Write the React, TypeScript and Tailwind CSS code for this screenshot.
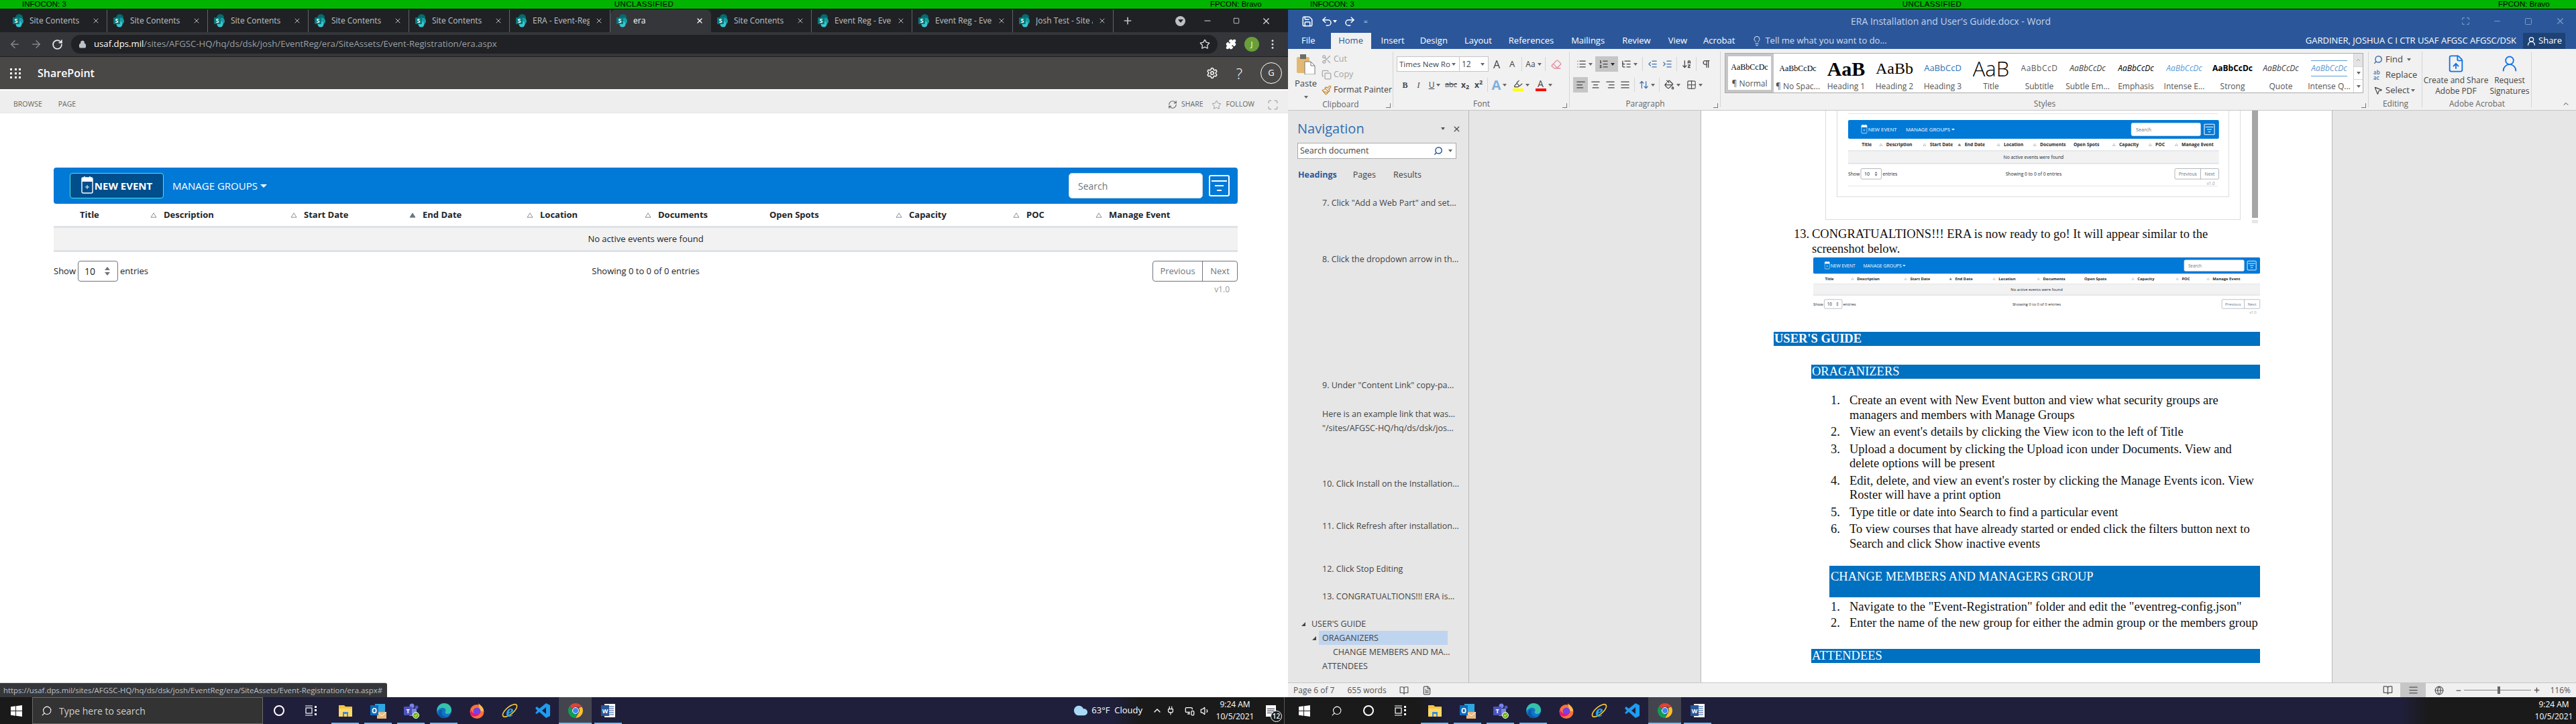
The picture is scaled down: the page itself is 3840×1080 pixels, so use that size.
import type { ReactNode } from 'react';
import {
  AlignCenter,
  AlignJustify,
  AlignLeft,
  AlignRight,
  ArrowDownAZ,
  ArrowLeft,
  ArrowRight,
  BookOpen,
  ChevronUp,
  Cloud,
  Copy,
  EllipsisVertical,
  FileText,
  FileUp,
  Globe,
  IndentDecrease,
  IndentIncrease,
  Lightbulb,
  List,
  ListOrdered,
  ListTree,
  Lock,
  Maximize,
  Minus,
  MonitorSmartphone,
  MousePointer2,
  Paintbrush,
  PaintBucket,
  Pilcrow,
  Plus,
  Plug,
  Puzzle,
  Redo2,
  RotateCw,
  Save,
  Scissors,
  Search,
  Settings,
  Square,
  Star,
  Undo2,
  UserRound,
  Volume1,
  X,
  Eraser,
  Grid2x2,
  ArrowUpDown,
  RefreshCw,
  Highlighter,
} from 'lucide-react';

const TAB_TITLES = [
  'Site Contents',
  'Site Contents',
  'Site Contents',
  'Site Contents',
  'Site Contents',
  'ERA - Event-Reg',
];
const TAB_TITLES_AFTER = ['Site Contents', 'Event Reg - Ever', 'Event Reg - Ever', 'Josh Test - Site A'];

const COLS_FULL = 'grid-cols-[143px_209px_177px_175px_176px_187px_187px_175px_123px_1fr]';
const COLS_SHOT_A = 'grid-cols-[88px_125px_100px_112px_104px_117px_110px_104px_75px_1fr]';
const COLS_SHOT_B = 'grid-cols-[124px_176px_149px_144px_147px_158px_155px_147px_102px_1fr]';

const HEADERS = [
  { label: 'Title', sort: '' },
  { label: 'Description', sort: 'up' },
  { label: 'Start Date', sort: 'up' },
  { label: 'End Date', sort: 'on' },
  { label: 'Location', sort: 'up' },
  { label: 'Documents', sort: 'up' },
  { label: 'Open Spots', sort: '' },
  { label: 'Capacity', sort: 'up' },
  { label: 'POC', sort: 'up' },
  { label: 'Manage Event', sort: 'up' },
];

const STYLES = [
  { sample: 'AaBbCcDc', label: '¶ Normal', cls: "text-[12px] text-black font-['Liberation_Serif',serif]" },
  { sample: 'AaBbCcDc', label: '¶ No Spac...', cls: "text-[12px] text-black font-['Liberation_Serif',serif]" },
  { sample: 'AaB', label: 'Heading 1', cls: "text-[30px] font-bold text-black font-['Liberation_Serif',serif]" },
  { sample: 'AaBb', label: 'Heading 2', cls: "text-[24px] text-black font-['Liberation_Serif',serif]" },
  { sample: 'AaBbCcD', label: 'Heading 3', cls: 'text-[13px] text-[#2e74b5]' },
  { sample: 'AaB', label: 'Title', cls: 'text-[31px] font-light text-black' },
  { sample: 'AaBbCcD', label: 'Subtitle', cls: 'text-[12px] tracking-[0.5px] text-[#5a5a5a]' },
  { sample: 'AaBbCcDc', label: 'Subtle Em...', cls: 'text-[12px] italic text-[#404040]' },
  { sample: 'AaBbCcDc', label: 'Emphasis', cls: 'text-[12px] italic text-black' },
  { sample: 'AaBbCcDc', label: 'Intense E...', cls: 'text-[12px] italic text-[#5b9bd5]' },
  { sample: 'AaBbCcDc', label: 'Strong', cls: 'text-[12px] font-bold text-black' },
  { sample: 'AaBbCcDc', label: 'Quote', cls: 'text-[12px] italic text-[#404040]' },
  { sample: 'AaBbCcDc', label: 'Intense Q...', cls: 'text-[12px] italic text-[#5b9bd5] border-y border-[#5b9bd5] py-[2px]' },
];

const NAV_ITEMS = [
  { text: '7. Click "Add a Web Part" and set...', cls: 'pl-[51px] mt-[21px]' },
  { text: '8. Click the dropdown arrow in th...', cls: 'pl-[51px] mt-[63px]' },
  { text: '9. Under "Content Link" copy-pa...', cls: 'pl-[51px] mt-[167px]' },
  { text: 'Here is an example link that was...', cls: 'pl-[51px] mt-[22px]' },
  { text: '"/sites/AFGSC-HQ/hq/ds/dsk/jos...', cls: 'pl-[51px]' },
  { text: '10. Click Install on the Installation...', cls: 'pl-[51px] mt-[62px]' },
  { text: '11. Click Refresh after installation...', cls: 'pl-[51px] mt-[42px]' },
  { text: '12. Click Stop Editing', cls: 'pl-[51px] mt-[43px]' },
  { text: '13. CONGRATUALTIONS!!! ERA is...', cls: 'pl-[51px] mt-[20px]' },
];

function SharePointIcon() {
  return (
    <svg viewBox="0 0 16 20" className="h-[20px] w-[16px] shrink-0">
      <circle cx="9.5" cy="5.5" r="5.5" fill="#036c70" />
      <circle cx="11" cy="10.5" r="5" fill="#1a9ba1" />
      <circle cx="9" cy="15" r="4.5" fill="#37c6d0" />
      <rect x="0" y="5" width="10" height="10" rx="1" fill="#03787c" />
      <text x="5" y="13" fontSize="9" fontWeight="700" fill="#fff" textAnchor="middle">
        S
      </text>
    </svg>
  );
}

function GreenBar() {
  return (
    <div className="relative flex h-[14px] shrink-0 items-center justify-center border-b border-black bg-[#00b400] font-['Liberation_Sans',sans-serif] text-[11.5px] leading-[13px] text-black">
      <span className="absolute left-[33px]">INFOCON: 3</span>
      <span className="tracking-[0.4px]">UNCLASSIFIED</span>
      <span className="absolute left-[1804px]">FPCON: Bravo</span>
    </div>
  );
}

function BrowserTab({ title }: { title: string }) {
  return (
    <div className="flex h-[34px] w-[150px] shrink-0 items-center border-r border-[#5f6368] bg-[#202124] bg-clip-padding pl-[9px]">
      <SharePointIcon />
      <span className="ml-[9px] w-[85px] overflow-hidden text-[12px] whitespace-nowrap text-[#bdc1c6]">{title}</span>
      <X className="ml-[8px] size-[12px] text-[#bdc1c6]" strokeWidth={2} />
    </div>
  );
}

function BrowserChrome() {
  return (
    <>
      <div className="flex h-[34px] shrink-0 items-center bg-[#202124] pl-[10px]">
        {TAB_TITLES.map((t, i) => (
          <BrowserTab key={i} title={t} />
        ))}
        <div className="flex h-[34px] w-[150px] shrink-0 items-center rounded-t-[8px] bg-[#35363a] pl-[9px]">
          <SharePointIcon />
          <span className="ml-[9px] w-[85px] text-[12px] text-white">era</span>
          <X className="ml-[8px] size-[12px] text-white" strokeWidth={2.5} />
        </div>
        {TAB_TITLES_AFTER.map((t, i) => (
          <BrowserTab key={i} title={t} />
        ))}
        <Plus className="ml-[13px] size-[16px] text-[#bdc1c6]" strokeWidth={2.5} />
        <div className="ml-[63px] flex size-[15px] items-center justify-center rounded-full bg-[#bdc1c6]">
          <div className="size-0 border-x-[4px] border-t-[5px] border-x-transparent border-t-[#202124]" />
        </div>
        <Minus className="ml-[26px] size-[14px] text-[#dadce0]" />
        <Square className="ml-[31px] size-[10px] text-[#dadce0]" />
        <X className="ml-[32px] size-[15px] text-[#dadce0]" />
      </div>
      <div className="flex h-[37px] shrink-0 items-center border-b border-[#1f1f1f] bg-[#35363a] pr-[14px] pl-[13px]">
        <ArrowLeft className="size-[18px] text-[#85878b]" />
        <ArrowRight className="ml-[14px] size-[18px] text-[#85878b]" />
        <RotateCw className="ml-[14px] size-[17px] text-[#e8eaed]" strokeWidth={2.5} />
        <div className="ml-[12px] flex h-[28px] flex-1 items-center rounded-full bg-[#202124] pr-[11px] pl-[11px]">
          <Lock className="size-[12px] text-[#bdc1c6]" fill="#bdc1c6" />
          <span className="ml-[11px] text-[13.2px] whitespace-nowrap text-[#9aa0a6]">
            <span className="text-white">usaf.dps.mil</span>/sites/AFGSC-HQ/hq/ds/dsk/josh/EventReg/era/SiteAssets/Event-Registration/era.aspx
          </span>
          <Star className="ml-auto size-[16px] text-[#dadce0]" />
        </div>
        <Puzzle className="ml-[12px] size-[16px] text-white" fill="#fff" />
        <div className="ml-[12px] flex size-[22px] items-center justify-center rounded-full bg-[#689f38] text-[11px] text-white">
          J
        </div>
        <EllipsisVertical className="ml-[11px] size-[18px] text-[#dadce0]" />
      </div>
    </>
  );
}

function SortArrow({ state }: { state: string }) {
  if (!state) return null;
  return (
    <svg viewBox="0 0 12 10" className="mr-[9px] h-[8px] w-[12px] shrink-0">
      <path d="M6 1 L11 9 L1 9 Z" fill={state === 'on' ? '#6c757d' : 'none'} stroke="#6c757d" strokeWidth="1" />
    </svg>
  );
}

function CalendarPlusIcon() {
  return (
    <svg viewBox="0 0 18 34" className="h-[34px] w-[18px] shrink-0">
      <rect x="1" y="5" width="16" height="23" rx="2" fill="none" stroke="#fff" strokeWidth="1.4" />
      <rect x="1" y="5" width="16" height="6" fill="#fff" />
      <path d="M5 3v3M13 3v3" stroke="#fff" strokeWidth="1.4" />
      <path d="M9 16v6M6 19h6" stroke="#fff" strokeWidth="1" />
    </svg>
  );
}

function EventTable({ cols, plain = false }: { cols: string; plain?: boolean }) {
  return (
    <div className="flex w-full flex-col text-[#212529]">
      <div className="flex h-[54px] items-center rounded-[4px] bg-[#0179d7] pr-[12px] pl-[24px]">
        {plain ? (
          <div className="flex h-[38px] items-center gap-[2px] px-[13px] text-[15px] text-white">
            <CalendarPlusIcon />
            NEW EVENT
          </div>
        ) : (
          <div className="flex h-[38px] w-[140px] items-center justify-center gap-[2px] rounded-[4px] border border-[#4fe3e8] bg-[#004e8c] text-[15px] font-bold text-white">
            <CalendarPlusIcon />
            NEW EVENT
          </div>
        )}
        <span className="ml-[13px] text-[15px] text-white">MANAGE GROUPS</span>
        <div className="ml-[4px] size-0 border-x-[5px] border-t-[5px] border-x-transparent border-t-white" />
        <div className="ml-auto flex h-[38px] w-[200px] items-center rounded-[5px] border border-[#ced4da] bg-white pl-[13px] text-[14px] text-[#6c757d]">
          Search
        </div>
        <div className="ml-[9px] flex h-[32px] w-[31px] flex-col items-center justify-center gap-[5px] rounded-[3px] border-2 border-white">
          <div className="h-[2px] w-[23px] bg-white" />
          <div className="h-[2px] w-[13px] bg-white" />
          <div className="h-[2px] w-[7px] bg-white" />
        </div>
      </div>
      <div className={`grid h-[36px] items-center border-b-[3px] border-[#dee2e6] text-[13px] font-bold ${cols}`}>
        {HEADERS.map((h, i) => (
          <div key={h.label} className={i === 0 ? 'pl-[39px]' : 'flex items-center'}>
            <SortArrow state={h.sort} />
            {h.label}
          </div>
        ))}
      </div>
      <div className="flex h-[36px] items-center justify-center border-b-[3px] border-[#dee2e6] bg-[#f2f2f2] text-[13px]">
        No active events were found
      </div>
      <div className="mt-[13px] flex items-center text-[13px]">
        <div className="flex flex-1 items-center">
          Show
          <div className="mx-[3px] flex h-[31px] w-[60px] items-center justify-between rounded-[4px] border border-[#6c757d] pr-[11px] pl-[9px] text-[14px]">
            10
            <div className="flex flex-col gap-[3px]">
              <div className="size-0 border-x-[4px] border-b-[5px] border-x-transparent border-b-[#6c757d]" />
              <div className="size-0 border-x-[4px] border-t-[5px] border-x-transparent border-t-[#6c757d]" />
            </div>
          </div>
          entries
        </div>
        <span>Showing 0 to 0 of 0 entries</span>
        <div className="flex flex-1 justify-end">
          <div className="flex h-[31px] items-center rounded-[4px] border border-[#6c757d] text-[#6c757d]">
            <span className="flex h-full w-[74px] items-center justify-center border-r border-[#6c757d]">Previous</span>
            <span className="flex h-full w-[51px] items-center justify-center">Next</span>
          </div>
        </div>
      </div>
      <div className="mt-[4px] pr-[12px] text-right text-[12px] leading-[16px] text-[#9a9a9a]">v1.0</div>
    </div>
  );
}

function SharePointPage() {
  return (
    <div className="relative flex min-h-0 flex-1 flex-col bg-white">
      <div className="flex h-[48px] shrink-0 items-center bg-[#4a4846] pr-[9px] pl-[15px] text-white">
        <div className="grid w-[17px] grid-cols-3 gap-[3px]">
          {Array.from({ length: 9 }).map((_, i) => (
            <div key={i} className="size-[3px] bg-white" />
          ))}
        </div>
        <span className="ml-[24px] text-[16px] font-semibold">SharePoint</span>
        <Settings className="ml-auto size-[18px]" />
        <span className="ml-[27px] text-[22px] font-light">?</span>
        <div className="ml-[27px] flex size-[32px] items-center justify-center rounded-full border border-white text-[13px]">
          G
        </div>
      </div>
      <div className="mt-[2px] flex h-[34px] shrink-0 items-center border-b border-[#e6e6e6] bg-[#eeeeee] pt-[9px] pr-[14px] pl-[20px] text-[10.5px] text-[#666666]">
        <span>BROWSE</span>
        <span className="ml-[24px]">PAGE</span>
        <RefreshCw className="ml-auto size-[14px]" />
        <span className="ml-[6px]">SHARE</span>
        <Star className="ml-[12px] size-[15px]" strokeWidth={1} />
        <span className="ml-[7px]">FOLLOW</span>
        <Maximize className="ml-[19px] size-[17px]" strokeWidth={1} />
      </div>
      <div className="pt-[81px] pr-[75px] pl-[80px]">
        <EventTable cols={COLS_FULL} />
      </div>
      <div className="absolute bottom-0 left-0 flex h-[22px] w-[577px] items-center rounded-tr-[3px] border-t border-[#d8d8d8] bg-[#35363a] pl-[5px] text-[11.4px] whitespace-nowrap text-[#bdc1c6]">
        https://usaf.dps.mil/sites/AFGSC-HQ/hq/ds/dsk/josh/EventReg/era/SiteAssets/Event-Registration/era.aspx#
      </div>
    </div>
  );
}

function WindowsLogo() {
  return (
    <svg viewBox="0 0 18 18" className="size-[17px]">
      <path d="M0 2.5 7.5 1.4V8.5H0Z M8.5 1.3 18 0V8.5H8.5Z M0 9.5H7.5V16.6L0 15.5Z M8.5 9.5H18V18L8.5 16.7Z" fill="#fff" />
    </svg>
  );
}

function ExplorerIcon() {
  return (
    <svg viewBox="0 0 24 24" className="size-[24px]">
      <path d="M2 4h8l2 2h10v15H2Z" fill="#f5c242" />
      <path d="M2 9h20v12H2Z" fill="#ffd966" />
      <path d="M8 14h8v7h-2v-4h-4v4H8Z" fill="#3d8bd4" />
    </svg>
  );
}

function OutlookIcon() {
  return (
    <svg viewBox="0 0 24 24" className="size-[24px]">
      <rect x="7" y="2" width="15" height="13" fill="#2fa6e0" />
      <path d="M10 14h14v10H10Z" fill="#e8b97e" />
      <path d="M10 14l7 6 7-6" fill="none" stroke="#fff" strokeWidth="1" />
      <rect x="0" y="4" width="12" height="15" fill="#0f6cbd" />
      <text x="6" y="16" fontSize="10" fontWeight="700" fill="#fff" textAnchor="middle">
        O
      </text>
    </svg>
  );
}

function TeamsIcon() {
  return (
    <svg viewBox="0 0 24 24" className="size-[24px]">
      <circle cx="13" cy="5" r="3.5" fill="#7b83eb" />
      <circle cx="20" cy="7" r="2.5" fill="#5059c9" />
      <rect x="9" y="9" width="11" height="11" rx="1" fill="#7b83eb" />
      <rect x="1" y="6" width="12" height="13" rx="1" fill="#4b53bc" />
      <text x="7" y="16" fontSize="9" fontWeight="700" fill="#fff" textAnchor="middle">
        T
      </text>
      <circle cx="19" cy="19" r="4.5" fill="#6bb700" stroke="#fff" strokeWidth="1" />
      <path d="M17 19l1.5 1.5 2.5-3" stroke="#fff" strokeWidth="1" fill="none" />
    </svg>
  );
}

function EdgeIcon() {
  return (
    <svg viewBox="0 0 24 24" className="size-[24px]">
      <circle cx="12" cy="12" r="11" fill="#1173c9" />
      <path d="M1.5 10C3 3 9 1 12 1c6 0 11 4 11 10 0 4-3 6-6 6-2 0-3.5-1-3.5-2.5 0-1 1-1.5 1-3C14.5 8.5 11 7 8 8 4.5 9 2.5 11 1.5 14Z" fill="#35c1a9" />
      <path d="M9 23c-4-1-6-5-5-9 1-3 4-4 6-3-3 2-2 8 3 10 3 1 6 0 8-2-2 3-7 5-12 4Z" fill="#0c59a4" />
    </svg>
  );
}

function FirefoxIcon() {
  return (
    <svg viewBox="0 0 24 24" className="size-[24px]">
      <circle cx="12" cy="13.5" r="10.5" fill="#ff7139" />
      <path d="M14 1c3 3 8 6 8 12h-6C16 8 15 5 14 1Z" fill="#ffbd4f" />
      <circle cx="12" cy="13" r="5.5" fill="#7542e5" />
      <path d="M3 11c2 6 9 8 13 5-2 5-10 7-14 1Z" fill="#e31587" />
    </svg>
  );
}

function IeIcon() {
  return (
    <svg viewBox="0 0 24 24" className="size-[26px]">
      <ellipse cx="12" cy="12" rx="12" ry="5" fill="none" stroke="#f3c63a" strokeWidth="1.5" transform="rotate(-40 12 12)" />
      <text x="12" y="20" fontSize="23" fontWeight="700" fontStyle="italic" fill="#2aa7e6" textAnchor="middle" fontFamily="Liberation Serif">
        e
      </text>
    </svg>
  );
}

function VsCodeIcon() {
  return (
    <svg viewBox="0 0 24 24" className="size-[24px]">
      <path d="M17 1 23 4v16l-6 3-10-9-4 3-2-1.5v-7L3 6l4 3Z" fill="#1f9cf0" />
      <path d="M17 7v10l-6-5Z" fill="#1e1e3c" />
      <path d="M1 8.5 4 12l-3 3.5Z" fill="#1e1e3c" />
    </svg>
  );
}

function ChromeIcon() {
  return (
    <svg viewBox="0 0 24 24" className="size-[24px]">
      <path d="M12 1a11 11 0 0 1 9.5 5.5H12a5.5 5.5 0 0 0-5 3.2L3.5 5A11 11 0 0 1 12 1Z" fill="#db4437" />
      <path d="M21.5 6.5A11 11 0 0 1 12 23l4.7-8A5.5 5.5 0 0 0 16.5 8Z" fill="#fbc02d" />
      <path d="M12 23A11 11 0 0 1 3.5 5L8 12.5a5.5 5.5 0 0 0 6 5Z" fill="#0f9d58" />
      <circle cx="12" cy="12" r="4.5" fill="#4285f4" stroke="#fff" strokeWidth="1" />
    </svg>
  );
}

function WordIcon() {
  return (
    <svg viewBox="0 0 24 24" className="size-[24px]">
      <rect x="6" y="2" width="16" height="20" fill="#fff" />
      <path d="M12 6h8M12 9h8M12 12h8M12 15h8M12 18h8" stroke="#2b579a" strokeWidth="1.2" />
      <rect x="1" y="4" width="12" height="16" fill="#2b579a" />
      <text x="7" y="16" fontSize="9" fontWeight="700" fill="#fff" textAnchor="middle">
        W
      </text>
    </svg>
  );
}

function AppSlot({ children, active = false, running = true }: { children: ReactNode; active?: boolean; running?: boolean }) {
  return (
    <div className={`relative flex h-full w-[49px] items-center justify-center ${active ? 'bg-[#44444f]' : ''}`}>
      {children}
      {running && (
        <div className={`absolute bottom-0 h-[2px] bg-[#76b9ed] ${active ? 'inset-x-0' : 'inset-x-[4px]'}`} />
      )}
    </div>
  );
}

function TaskViewIcon() {
  return (
    <svg viewBox="0 0 18 16" className="h-[16px] w-[18px]">
      <path d="M0 1h11M0 15h11" stroke="#fff" strokeWidth="1.2" />
      <rect x="1" y="4" width="9" height="8" fill="none" stroke="#fff" strokeWidth="1.2" />
      <path d="M14 1h3v3h-3Zm0 5h3v3h-3Zm0 6h3v3h-3Z" fill="#fff" />
    </svg>
  );
}

function TaskbarApps() {
  return (
    <>
      <div className="flex h-full w-[48px] items-center justify-center">
        <div className="size-[16px] rounded-full border-[2.5px] border-white" />
      </div>
      <div className="mr-[2px] flex h-full w-[48px] items-center justify-center">
        <TaskViewIcon />
      </div>
      <AppSlot>
        <ExplorerIcon />
      </AppSlot>
      <AppSlot>
        <OutlookIcon />
      </AppSlot>
      <AppSlot>
        <TeamsIcon />
      </AppSlot>
      <AppSlot>
        <EdgeIcon />
      </AppSlot>
      <AppSlot running={false}>
        <FirefoxIcon />
      </AppSlot>
      <AppSlot running={false}>
        <IeIcon />
      </AppSlot>
      <AppSlot running={false}>
        <VsCodeIcon />
      </AppSlot>
      <AppSlot active>
        <ChromeIcon />
      </AppSlot>
      <AppSlot>
        <WordIcon />
      </AppSlot>
    </>
  );
}

function Clock() {
  return (
    <div className="flex w-[58px] flex-col items-center text-[12px] leading-[18px] text-white">
      <span>9:24 AM</span>
      <span>10/5/2021</span>
    </div>
  );
}

function LeftTaskbar() {
  return (
    <div className="flex h-[40px] shrink-0 items-center bg-[linear-gradient(90deg,#1a1a1a_0,#1a1a1a_392px,#1f1f3b_392px,#1f1f3b_1660px,#1a1a1a_1700px)]">
      <div className="flex h-full w-[48px] items-center justify-center">
        <WindowsLogo />
      </div>
      <div className="flex h-full w-[344px] items-center border border-[#6a6a6a] bg-[#333333] pl-[12px] text-[14px] text-[#cfcfcf]">
        <Search className="size-[17px] -scale-x-100 text-white" strokeWidth={1.5} />
        <span className="ml-[10px]">Type here to search</span>
      </div>
      <TaskbarApps />
      <div className="ml-auto flex h-full items-center pr-[5px] text-white">
        <Cloud className="size-[22px] text-[#a9d8f5]" fill="#a9d8f5" />
        <span className="ml-[5px] text-[13px] whitespace-nowrap">63°F&nbsp; Cloudy</span>
        <ChevronUp className="ml-[14px] size-[16px]" />
        <Plug className="ml-[5px] size-[14px]" />
        <MonitorSmartphone className="ml-[14px] size-[15px]" />
        <Volume1 className="ml-[8px] size-[15px]" />
        <div className="ml-[8px]">
          <Clock />
        </div>
        <div className="relative ml-[10px] flex h-full w-[34px] items-center justify-center">
          <div className="mr-[5px] flex h-[17px] w-[15px] flex-col justify-center gap-[2px] bg-white px-[2px]">
            <div className="h-[1px] bg-[#1f1f3b]" />
            <div className="h-[1px] bg-[#1f1f3b]" />
            <div className="h-[1px] bg-[#1f1f3b]" />
          </div>
          <div className="absolute right-[3px] bottom-[3px] flex size-[17px] items-center justify-center rounded-full border border-white bg-[#1a1a1a] text-[10px] font-semibold">
            12
          </div>
        </div>
        <div className="h-full w-[1px] bg-[#555555]" />
      </div>
    </div>
  );
}

function RightTaskbar() {
  return (
    <div className="flex h-[40px] shrink-0 items-center bg-[linear-gradient(90deg,#1a1a1a_0,#1a1a1a_192px,#1f1f3b_240px,#1f1f3b_1660px,#1a1a1a_1700px)]">
      <div className="flex h-full w-[48px] items-center justify-center">
        <WindowsLogo />
      </div>
      <div className="flex h-full w-[48px] items-center justify-center">
        <Search className="size-[17px] -scale-x-100 text-white" strokeWidth={1.5} />
      </div>
      <TaskbarApps />
      <div className="ml-auto pr-[4px]">
        <Clock />
      </div>
    </div>
  );
}

function RibbonGroup({ width, label, launcher = true, children }: { width: string; label: string; launcher?: boolean; children: ReactNode }) {
  return (
    <div className={`relative flex shrink-0 flex-col ${width}`}>
      <div className="h-[75px]">{children}</div>
      <div className="text-center text-[12px] leading-[18px] text-[#666666]">{label}</div>
      {launcher && (
        <div className="absolute right-[4px] bottom-[3px] size-[7px] border-r border-b border-[#777777]" />
      )}
      <div className="absolute top-[4px] right-0 bottom-[4px] w-[1px] bg-[#d5d5d5]" />
    </div>
  );
}

function Caret({ color = 'border-t-[#666666]' }: { color?: string }) {
  return <div className={`size-0 border-x-[3px] border-t-[4px] border-x-transparent ${color}`} />;
}

function Tool({ width = 'w-[22px]', active = false, children }: { width?: string; active?: boolean; children: ReactNode }) {
  return (
    <div className={`flex h-[23px] shrink-0 items-center justify-center gap-[3px] text-[#444444] ${width} ${active ? 'bg-[#c6c6c6]' : ''}`}>
      {children}
    </div>
  );
}

function Sep() {
  return <div className="mx-[3px] h-[21px] w-[1px] shrink-0 bg-[#d5d5d5]" />;
}

function PasteIcon() {
  return (
    <svg viewBox="0 0 28 30" className="h-[30px] w-[28px]">
      <rect x="0" y="4" width="19" height="24" rx="2" fill="#e3b972" />
      <rect x="5" y="0" width="9" height="7" fill="#6b6b6b" />
      <path d="M12 11h9l6 6v13H12Z" fill="#fff" stroke="#777" strokeWidth="1" />
      <path d="M21 11v6h6" fill="none" stroke="#777" strokeWidth="1" />
    </svg>
  );
}

function WordRibbon() {
  return (
    <div className="flex h-[92px] shrink-0 border-b border-[#c6c6c6] bg-[#f1f1f1] text-[12px] text-[#444444]">
      <RibbonGroup width="w-[157px]" label="Clipboard">
        <div className="flex">
          <div className="flex w-[50px] flex-col items-center pt-[8px] pl-[3px]">
            <PasteIcon />
            <span className="mt-[4px] text-[13px]">Paste</span>
            <div className="mt-[8px]">
              <Caret />
            </div>
          </div>
          <div className="flex flex-col pt-[4px]">
            <div className="flex h-[23px] items-center text-[#a6a6a6]">
              <Scissors className="size-[15px]" />
              <span className="ml-[3px] text-[12.5px]">Cut</span>
            </div>
            <div className="flex h-[23px] items-center text-[#a6a6a6]">
              <Copy className="size-[15px]" />
              <span className="ml-[3px] text-[12.5px]">Copy</span>
            </div>
            <div className="flex h-[23px] items-center">
              <Paintbrush className="size-[15px] text-[#c98b2f]" />
              <span className="ml-[3px] text-[12.5px] whitespace-nowrap">Format Painter</span>
            </div>
          </div>
        </div>
      </RibbonGroup>
      <RibbonGroup width="w-[263px]" label="Font">
        <div className="flex flex-col gap-[8px] pt-[11px] pl-[5px]">
          <div className="flex items-center">
            <div className="flex h-[23px] w-[94px] items-center justify-between border border-[#c6c6c6] bg-white pr-[5px] pl-[3px] text-[11.5px] whitespace-nowrap">
              Times New Ro
              <Caret />
            </div>
            <div className="flex h-[23px] w-[43px] items-center justify-between border border-l-0 border-[#c6c6c6] bg-white pr-[5px] pl-[3px]">
              12
              <Caret />
            </div>
            <Tool width="w-[24px]">
              <span className="text-[16px]">A</span>
            </Tool>
            <Tool width="w-[22px]">
              <span className="text-[13px]">A</span>
            </Tool>
            <Sep />
            <Tool width="w-[28px]">
              Aa
              <Caret />
            </Tool>
            <Sep />
            <Tool width="w-[26px]">
              <Eraser className="size-[16px] text-[#e58aa0]" />
            </Tool>
          </div>
          <div className="flex items-center pl-[3px]">
            <Tool width="w-[19px]">
              <b className="font-['Liberation_Serif',serif]">B</b>
            </Tool>
            <Tool width="w-[21px]">
              <i className="font-['Liberation_Serif',serif]">I</i>
            </Tool>
            <Tool width="w-[27px]">
              <u>U</u>
              <Caret />
            </Tool>
            <Tool width="w-[22px]">
              <span className="text-[11px] line-through">abc</span>
            </Tool>
            <Tool width="w-[20px]">
              <b>
                x<sub>2</sub>
              </b>
            </Tool>
            <Tool width="w-[20px]">
              <b>
                x<sup>2</sup>
              </b>
            </Tool>
            <Sep />
            <Tool width="w-[28px]">
              <span className="text-[20px] leading-none font-bold text-[#7fb0e0]">A</span>
              <Caret />
            </Tool>
            <Tool width="w-[36px]">
              <div className="flex flex-col items-center">
                <Highlighter className="size-[14px]" />
                <div className="h-[4px] w-[16px] bg-[#ffff00]" />
              </div>
              <Caret />
            </Tool>
            <Tool width="w-[32px]">
              <div className="flex flex-col items-center">
                <span className="text-[14px] leading-[14px]">A</span>
                <div className="h-[4px] w-[16px] bg-[#ff0000]" />
              </div>
              <Caret />
            </Tool>
          </div>
        </div>
      </RibbonGroup>
      <RibbonGroup width="w-[225px]" label="Paragraph">
        <div className="flex flex-col gap-[8px] pt-[11px] pl-[5px]">
          <div className="flex items-center">
            <Tool width="w-[33px]">
              <List className="size-[15px]" />
              <Caret />
            </Tool>
            <Tool width="w-[34px]" active>
              <ListOrdered className="size-[15px]" />
              <Caret color="border-t-[#222222]" />
            </Tool>
            <Tool width="w-[33px]">
              <ListTree className="size-[15px]" />
              <Caret />
            </Tool>
            <Sep />
            <Tool>
              <IndentDecrease className="size-[15px] text-[#3f6fb0]" />
            </Tool>
            <Tool>
              <IndentIncrease className="size-[15px] text-[#3f6fb0]" />
            </Tool>
            <Sep />
            <Tool>
              <ArrowDownAZ className="size-[15px]" />
            </Tool>
            <Sep />
            <Tool>
              <Pilcrow className="size-[15px]" />
            </Tool>
          </div>
          <div className="flex items-center">
            <Tool active>
              <AlignLeft className="size-[15px]" />
            </Tool>
            <Tool>
              <AlignCenter className="size-[15px]" />
            </Tool>
            <Tool>
              <AlignRight className="size-[15px]" />
            </Tool>
            <Tool>
              <AlignJustify className="size-[15px]" />
            </Tool>
            <Sep />
            <Tool width="w-[30px]">
              <ArrowUpDown className="size-[15px] text-[#3f6fb0]" />
              <Caret />
            </Tool>
            <Sep />
            <Tool width="w-[32px]">
              <PaintBucket className="size-[15px]" />
              <Caret />
            </Tool>
            <Tool width="w-[33px]">
              <Grid2x2 className="size-[15px]" strokeDasharray="2 2" />
              <Caret />
            </Tool>
          </div>
        </div>
      </RibbonGroup>
      <RibbonGroup width="w-[966px]" label="Styles">
        <div className="mt-[6px] ml-[6px] flex h-[60px] w-[952px] border border-[#ababab] bg-white">
          {STYLES.map((s, i) => (
            <div
              key={i}
              className={`flex h-full w-[72px] shrink-0 flex-col items-center overflow-hidden ${i === 0 ? 'border-[4px] border-[#c6c6c6]' : 'pt-[4px]'}`}
            >
              <div className="flex h-[36px] items-center overflow-hidden whitespace-nowrap">
                <span className={s.cls}>{s.sample}</span>
              </div>
              <span className="text-[12px] whitespace-nowrap text-[#555555]">{s.label}</span>
            </div>
          ))}
          <div className="flex flex-1 flex-col border-l border-[#d5d5d5] text-[#888888]">
            <div className="flex flex-1 items-center justify-center bg-[#e4e4e4]">
              <ChevronUp className="size-[9px]" />
            </div>
            <div className="flex flex-1 items-center justify-center border-y border-[#d5d5d5]">
              <Caret />
            </div>
            <div className="flex flex-1 items-center justify-center">
              <Caret />
            </div>
          </div>
        </div>
      </RibbonGroup>
      <RibbonGroup width="w-[80px]" label="Editing" launcher={false}>
        <div className="flex flex-col pt-[4px] pl-[7px] text-[13px]">
          <div className="flex h-[23px] items-center">
            <Search className="size-[14px] -scale-x-100 text-[#3f6fb0]" strokeWidth={2.5} />
            <span className="ml-[4px]">Find</span>
            <div className="ml-[6px]">
              <Caret />
            </div>
          </div>
          <div className="flex h-[23px] items-center">
            <span className="w-[14px] text-[8px] leading-[8px] font-semibold text-[#3f6fb0]">ab ac</span>
            <span className="ml-[4px]">Replace</span>
          </div>
          <div className="flex h-[23px] items-center">
            <MousePointer2 className="size-[14px]" />
            <span className="ml-[4px]">Select</span>
            <div className="ml-[2px]">
              <Caret />
            </div>
          </div>
        </div>
      </RibbonGroup>
      <RibbonGroup width="w-[163px]" label="Adobe Acrobat" launcher={false}>
        <div className="flex pt-[8px] text-center text-[12px] leading-[16px] whitespace-nowrap">
          <div className="flex w-[100px] flex-col items-center">
            <FileUp className="mb-[3px] size-[28px] text-[#1473e6]" strokeWidth={1.6} />
            Create and Share
            <br />
            Adobe PDF
          </div>
          <div className="flex w-[60px] flex-col items-center">
            <UserRound className="mb-[3px] size-[28px] text-[#1473e6]" strokeWidth={1.6} />
            Request
            <br />
            Signatures
          </div>
        </div>
      </RibbonGroup>
      <div className="flex flex-1 items-end justify-end pr-[9px] pb-[3px]">
        <ChevronUp className="size-[12px]" />
      </div>
    </div>
  );
}

function WordTitleBar() {
  return (
    <div className="shrink-0 bg-[#2b579a] text-white">
      <div className="relative flex h-[35px] items-center pl-[20px]">
        <Save className="size-[18px]" />
        <Undo2 className="ml-[11px] size-[18px]" />
        <Caret color="border-t-white" />
        <Redo2 className="ml-[10px] size-[18px]" />
        <span className="ml-[12px] text-[10px] leading-none">=</span>
        <span className="absolute left-[839px] text-[14px] whitespace-nowrap text-[#c4d3e8]">
          ERA Installation and User's Guide.docx - Word
        </span>
        <div className="ml-auto flex items-center gap-[34px] pr-[16px] text-[#7f9ac4]">
          <Maximize className="size-[13px]" />
          <Minus className="size-[13px]" />
          <Square className="size-[12px]" />
          <X className="size-[15px]" />
        </div>
      </div>
      <div className="flex h-[24px] items-center text-[13px]">
        <span className="ml-[20px]">File</span>
        <span className="ml-[23px] flex h-full w-[60px] items-center justify-center bg-[#f1f1f1] text-[#2b579a]">Home</span>
        <span className="ml-[15px]">Insert</span>
        <span className="ml-[23px]">Design</span>
        <span className="ml-[25px]">Layout</span>
        <span className="ml-[25px]">References</span>
        <span className="ml-[26px]">Mailings</span>
        <span className="ml-[26px]">Review</span>
        <span className="ml-[26px]">View</span>
        <span className="ml-[24px]">Acrobat</span>
        <Lightbulb className="ml-[25px] size-[16px]" strokeWidth={1.3} />
        <span className="ml-[4px] text-[#d3deee]">Tell me what you want to do...</span>
        <span className="ml-auto whitespace-nowrap">GARDINER, JOSHUA C I CTR USAF AFGSC AFGSC/DSK</span>
        <div className="mr-[16px] ml-[10px] flex h-full w-[63px] items-center justify-center gap-[3px] bg-[#1e4274]">
          <UserRound className="size-[15px]" />
          Share
        </div>
      </div>
    </div>
  );
}

function NavigationPane() {
  return (
    <div className="flex w-[270px] shrink-0 flex-col border-r border-[#b8b8b8] bg-[#e6e6e6] text-[12.5px] text-[#444444]">
      <div className="mt-[15px] flex items-center pr-[11px] pl-[14px]">
        <span className="text-[20px] leading-[24px] text-[#2f6fb5]">Navigation</span>
        <div className="mr-[11px] ml-auto">
          <Caret color="border-t-[#555555]" />
        </div>
        <X className="size-[13px] text-[#555555]" strokeWidth={2.5} />
      </div>
      <div className="mt-[9px] ml-[14px] flex h-[24px] w-[237px] items-center border border-[#ababab] bg-white pr-[5px] pl-[3px]">
        Search document
        <Search className="ml-auto size-[14px] -scale-x-100 text-[#2b579a]" strokeWidth={2.5} />
        <div className="ml-[8px]">
          <Caret />
        </div>
      </div>
      <div className="mt-[13px] flex items-center pl-[15px] leading-[21px]">
        <b className="text-[#2b579a]">Headings</b>
        <span className="ml-[24px]">Pages</span>
        <span className="ml-[26px]">Results</span>
      </div>
      {NAV_ITEMS.map((item) => (
        <div key={item.text} className={`leading-[21px] whitespace-nowrap ${item.cls}`}>
          {item.text}
        </div>
      ))}
      <div className="mt-[20px] flex items-center pl-[20px] leading-[21px]">
        <div className="size-0 border-b-[6px] border-l-[6px] border-b-[#444444] border-l-transparent" />
        <span className="ml-[9px]">USER'S GUIDE</span>
      </div>
      <div className="flex items-center pl-[36px] leading-[21px]">
        <div className="size-0 border-b-[6px] border-l-[6px] border-b-[#444444] border-l-transparent" />
        <div className="ml-[4px] w-[192px] bg-[#bfd4ef] pl-[5px]">ORAGANIZERS</div>
      </div>
      <div className="pl-[67px] leading-[21px] whitespace-nowrap">CHANGE MEMBERS AND MA...</div>
      <div className="pl-[51px] leading-[21px]">ATTENDEES</div>
    </div>
  );
}

function DocBar({ indent, children, bold = false }: { indent: string; children: ReactNode; bold?: boolean }) {
  return (
    <div className={`h-[21px] shrink-0 bg-[#0070c0] pl-[1px] leading-[21px] text-white ${indent} ${bold ? 'font-bold' : ''}`}>
      {children}
    </div>
  );
}

function NumberedItem({ n, children }: { n: number; children: ReactNode }) {
  return (
    <div className="flex pl-[85px]">
      <span className="w-[28px] shrink-0">{n}.</span>
      <span>{children}</span>
    </div>
  );
}

function WordPage() {
  return (
    <div className="flex w-[941px] shrink-0 flex-col overflow-hidden border-r border-[#b8b8b8] bg-white pr-[107px] pl-[108px] font-['Liberation_Serif',serif] text-[18.5px] leading-[21.5px] text-[#111111]">
      <div className="flex h-[168px] shrink-0">
        <div className="ml-[77px] h-[163px] w-[619px] shrink-0 border-x border-b border-[#dcdcdc] px-[16px] font-['Open_Sans',sans-serif] leading-normal">
          <div className="h-[129px] border-x border-b border-[#dcdcdc] px-[16px] pt-[4px]">
            <div className="h-[109px] border-y border-[#e4e4e4] pt-[9px]">
              <div className="h-[99px]">
                <div className="w-[1063px] origin-top-left scale-[0.52]">
                  <EventTable cols={COLS_SHOT_A} plain />
                </div>
              </div>
            </div>
          </div>
        </div>
        <div className="ml-[17px] flex w-[9px] shrink-0 flex-col">
          <div className="h-[160px] bg-[#a6a6a6]" />
          <div className="mt-[3px] h-[5px] bg-[#e6e6e6]" />
        </div>
      </div>
      <div className="mt-[6px] flex pl-[30px]">
        <span className="w-[27px] shrink-0">13.</span>
        <span>CONGRATUALTIONS!!! ERA is now ready to go! It will appear similar to the screenshot below.</span>
      </div>
      <div className="mt-[2px] ml-[59px] h-[111px] w-[666px] shrink-0 font-['Open_Sans',sans-serif] leading-normal">
        <div className="w-[1480px] origin-top-left scale-[0.45]">
          <EventTable cols={COLS_SHOT_B} plain />
        </div>
      </div>
      <DocBar indent="" bold>
        USER'S GUIDE
      </DocBar>
      <div className="h-[28px] shrink-0" />
      <DocBar indent="ml-[56px]">ORAGANIZERS</DocBar>
      <div className="mt-[22px] flex flex-col gap-[4px]">
        <NumberedItem n={1}>Create an event with New Event button and view what security groups are managers and members with Manage Groups</NumberedItem>
        <NumberedItem n={2}>View an event's details by clicking the View icon to the left of Title</NumberedItem>
        <NumberedItem n={3}>Upload a document by clicking the Upload icon under Documents. View and delete options will be present</NumberedItem>
        <NumberedItem n={4}>Edit, delete, and view an event's roster by clicking the Manage Events icon. View Roster will have a print option</NumberedItem>
        <NumberedItem n={5}>Type title or date into Search to find a particular event</NumberedItem>
        <NumberedItem n={6}>To view courses that have already started or ended click the filters button next to Search and click Show inactive events</NumberedItem>
      </div>
      <div className="mt-[22px] ml-[83px] h-[47px] shrink-0 bg-[#0070c0] pt-[6px] pl-[2px] text-white">
        CHANGE MEMBERS AND MANAGERS GROUP
      </div>
      <div className="mt-[4px] flex flex-col gap-[2px]">
        <NumberedItem n={1}>Navigate to the "Event-Registration" folder and edit the "eventreg-config.json"</NumberedItem>
        <NumberedItem n={2}>Enter the name of the new group for either the admin group or the members group</NumberedItem>
      </div>
      <div className="h-[28px] shrink-0" />
      <DocBar indent="ml-[56px]">ATTENDEES</DocBar>
    </div>
  );
}

function WordStatusBar() {
  return (
    <div className="flex h-[22px] shrink-0 items-center border-t border-[#c6c6c6] bg-[#f0f0f0] pr-[8px] pl-[8px] text-[12px] text-[#555555]">
      <span>Page 6 of 7</span>
      <span className="ml-[19px]">655 words</span>
      <BookOpen className="ml-[19px] size-[14px]" />
      <FileText className="ml-[20px] size-[14px]" />
      <BookOpen className="ml-auto size-[15px]" />
      <div className="ml-[11px] flex h-full w-[38px] items-center justify-center bg-[#c6c6c6]">
        <AlignJustify className="size-[15px]" />
      </div>
      <Globe className="ml-[13px] size-[14px]" />
      <Minus className="ml-[17px] size-[10px]" strokeWidth={3} />
      <div className="relative ml-[3px] h-[1px] w-[100px] bg-[#888888]">
        <div className="absolute top-[-5px] left-[50px] h-[11px] w-[4px] bg-[#666666]" />
      </div>
      <Plus className="ml-[3px] size-[11px]" strokeWidth={3} />
      <span className="ml-[14px]">116%</span>
    </div>
  );
}

export default function App() {
  return (
    <div className="flex h-[1080px] w-[3840px] overflow-hidden font-['Open_Sans','Noto_Sans',sans-serif]">
      <div className="flex w-[1920px] shrink-0 flex-col">
        <GreenBar />
        <BrowserChrome />
        <SharePointPage />
        <LeftTaskbar />
      </div>
      <div className="flex w-[1920px] shrink-0 flex-col">
        <GreenBar />
        <WordTitleBar />
        <WordRibbon />
        <div className="flex min-h-0 flex-1 bg-[#e6e6e6]">
          <NavigationPane />
          <div className="w-[346px] shrink-0 border-r border-[#b8b8b8]" />
          <WordPage />
        </div>
        <WordStatusBar />
        <RightTaskbar />
      </div>
    </div>
  );
}
